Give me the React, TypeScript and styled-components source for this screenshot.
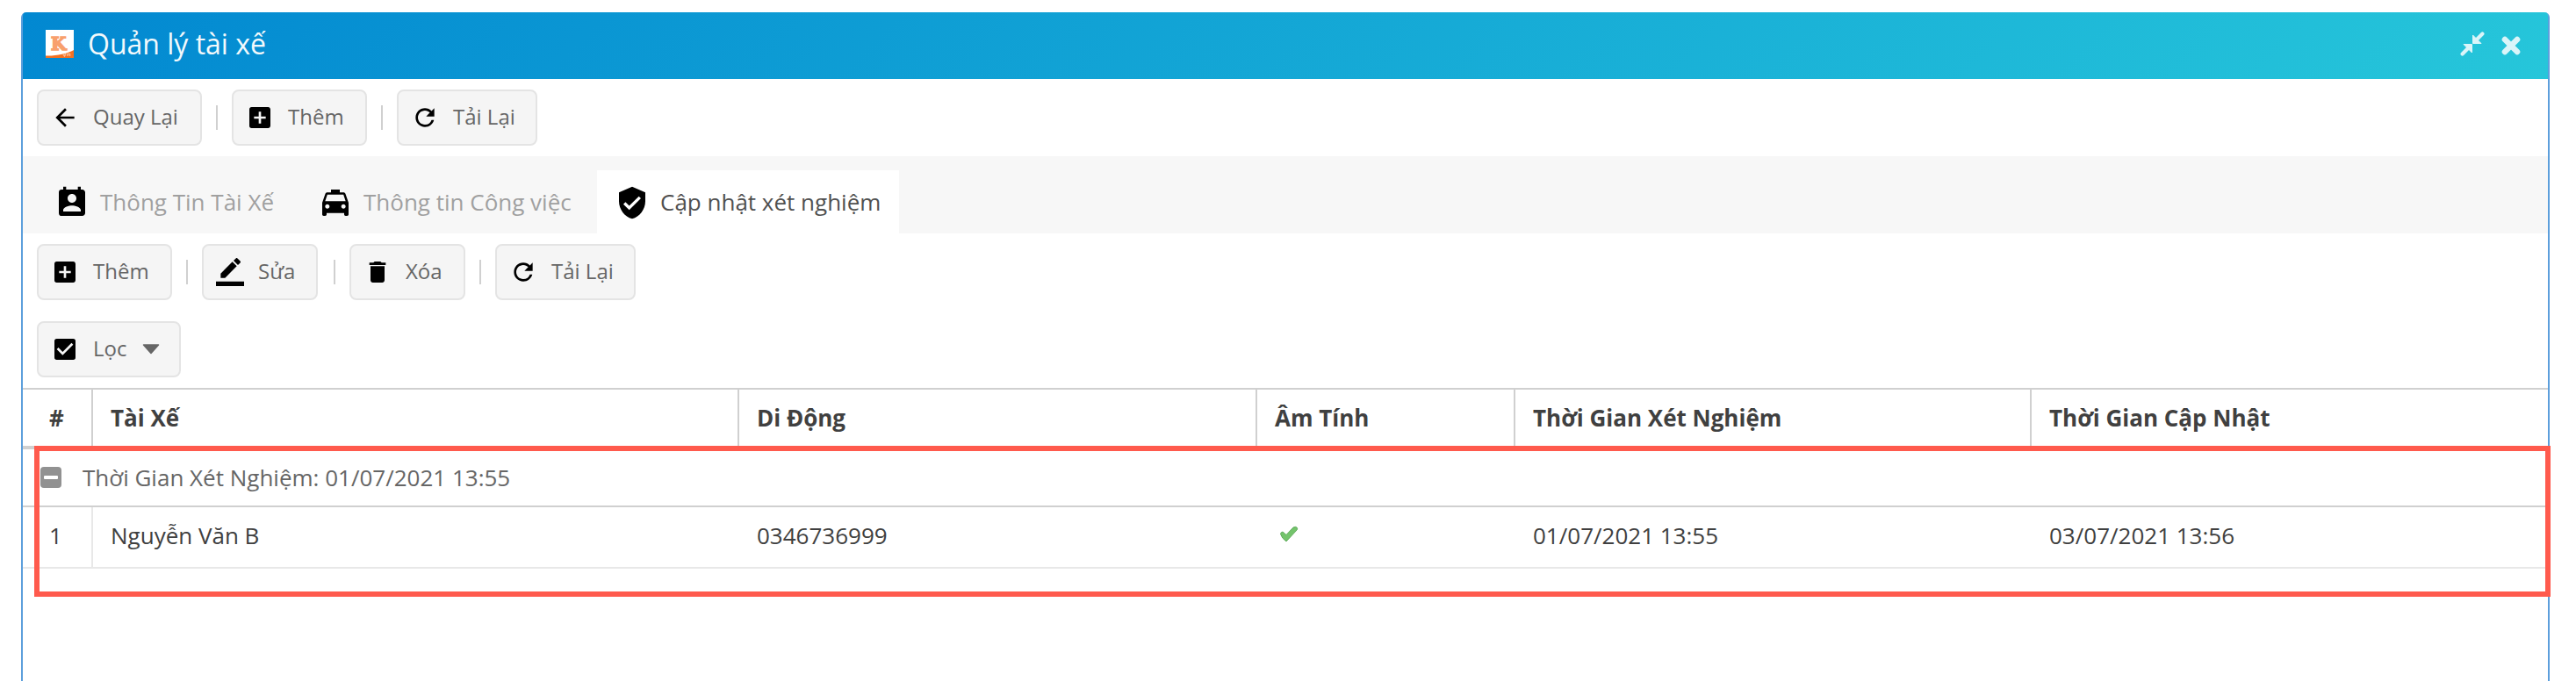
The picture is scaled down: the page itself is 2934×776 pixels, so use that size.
import React from "react";
import styled, { createGlobalStyle } from "styled-components";
import {
  MdArrowBack, MdAddBox, MdRefresh, MdCheckBox, MdDelete,
  MdPermContactCalendar, MdLocalTaxi, MdVerifiedUser,
} from "react-icons/md";

const Global = createGlobalStyle`
  * { box-sizing: border-box; }
  body { margin: 0; background: #fff; font-family: "Open Sans", "Noto Sans", sans-serif; }
`;
const Page = styled.div`
  height: 776px; padding: 14px 30px 0 24px; overflow: hidden; position: relative;
`;
const Window = styled.div`
  height: 762px; border: solid #5c9fdc; border-width: 0 2px; background: #fff;
  border-radius: 6px 6px 0 0; display: flex; flex-direction: column;
`;
const TitleBar = styled.header`
  height: 76px; flex: none; display: flex; align-items: center; padding: 0 31px 4px 26px;
  background: linear-gradient(135deg, #0288d1, #26c6da); border-radius: 4px 4px 0 0; color: #f2f9fc;
`;
const Title = styled.h1`
  margin: 0 auto 0 16px; font-size: 32px; font-weight: 400; line-height: 44px; padding-bottom: 1px;
`;
const WindowTools = styled.div`
  display: flex; gap: 19px; align-items: center;
  svg:last-child { margin-top: 3px; }
`;
const Toolbar = styled.div`
  height: 88px; flex: none; display: flex; align-items: center; padding: 0 16px;
`;
const Button = styled.button<{ $w: number }>`
  height: 64px; width: ${(p) => p.$w}px; padding: 0 0 0 14px; display: flex; align-items: center;
  border: 2px solid #e4e4e4; border-radius: 8px; background: #f5f5f5; color: #666;
  font: 400 24px/32px "Open Sans", sans-serif; white-space: nowrap;
  svg { flex: none; color: #000; }
`;
const Label = styled.span`
  margin-left: 16px; padding-bottom: 2px;
`;
const TabLabel = styled.span`
  margin-left: 12px; padding-bottom: 2px;
`;
const Divider = styled.i<{ $l?: number }>`
  width: 2px; height: 28px; background: #d0d0d0; margin: 0 16px 0 ${(p) => p.$l ?? 16}px;
`;
const Tabs = styled.nav`
  height: 88px; flex: none; display: flex; align-items: flex-end; background: #f7f7f7; padding-left: 14px;
`;
const Tab = styled.div<{ $w: number; $active?: boolean }>`
  height: 72px; width: ${(p) => p.$w}px; padding: 2px 0 0 ${(p) => (p.$active ? 20 : 22)}px;
  display: flex; align-items: center; font-size: 26px; line-height: 36px; white-space: nowrap;
  background: ${(p) => (p.$active ? "#fff" : "transparent")}; color: ${(p) => (p.$active ? "#505050" : "#a0a0a0")};
  svg { flex: none; color: #000; }
`;
const Grid = styled.section`
  border-top: 2px solid #d0d0d0; font-size: 26px; color: #404040;
`;
const Row = styled.div<{ $head?: boolean }>`
  display: grid; grid-template-columns: 80px 736px 590px 294px 588px 1fr;
  height: ${(p) => (p.$head ? 68 : 70)}px;
  border-bottom: ${(p) => (p.$head ? "4px solid #d0d0d0" : "2px solid #e8e8e8")};
  font-weight: ${(p) => (p.$head ? 700 : 400)};
`;
const Cell = styled.div<{ $line?: string; $pad?: number; $up?: number }>`
  display: flex; align-items: center; padding: 0 0 ${(p) => p.$up ?? 0}px ${(p) => p.$pad ?? 20}px;
  border-right: 2px solid ${(p) => p.$line ?? "transparent"}; white-space: nowrap;
`;
const Group = styled.div`
  height: 66px; border-bottom: 2px solid #d0d0d0; display: flex; align-items: center;
  padding-left: 20px; gap: 24px; color: #666;
`;
const Highlight = styled.div`
  position: absolute; left: 39px; top: 508px; width: 2866px; height: 172px; border: 6px solid #ff5a4d;
`;

const Logo = () => (
  <svg width="32" height="32" viewBox="0 0 32 32">
    <path fill="#fff" d="M0 0h32v32H0z" />
    <text
      x="6" y="22.5" fontFamily="DejaVu Serif, serif" fontWeight="700" fontSize="20"
      fill="#f8a06c" stroke="#f8a06c" strokeWidth="1.6"
    >K</text>
    <path fill="#f37021" d="M0 32v-2.5C11 30 24 27.500 32 23v9z" />
    <path stroke="#f9b78e" strokeWidth="1.5" fill="none" d="M20 28l1.500 2 1.500-2.500M25 30v-2.500h2.500V30" />
  </svg>
);
const Collapse = () => (
  <svg width="28" height="28" viewBox="0 0 28 28" fill="#daf5f9">
    <path fill="none" stroke="#daf5f9" strokeWidth="4.2" strokeLinecap="round" d="M25.400 2.600L19 9M2.600 25.400L9 19" />
    <path
      stroke="#daf5f9" strokeLinejoin="round"
      d="M14.500 4V13.500H24zM13.500 24V14.500H4z"
    />
  </svg>
);
const Close = () => (
  <svg width="22" height="22" viewBox="0 0 22 22" stroke="#daf5f9" strokeWidth="6.6" strokeLinecap="round">
    <path d="M4 4l14 14M18 4L4 18" />
  </svg>
);
const Pencil = () => (
  <svg width="32" height="32" viewBox="0 0 24 24" fill="currentColor">
    <path d="M17.750 7L14 3.250l-10 10V17h3.750l10-10zm2.960-2.960c.39-.39.39-1.020 0-1.410L18.370.29a.996.996 0 0 0-1.410 0L15 2.250 18.750 6l1.960-1.960zM0 20h24v4H0z" />
  </svg>
);
const Caret = styled(({ className }: { className?: string }) => (
  <svg className={className} width="20" height="12" viewBox="0 0 20 12">
    <path d="M1.500 1h17L10 10.500z" fill="#666" stroke="#666" strokeWidth="1.5" strokeLinejoin="round" />
  </svg>
))`
  margin-left: 18px;
`;
const Minus = () => (
  <svg width="24" height="24" viewBox="0 0 24 24">
    <rect width="24" height="24" rx="4" fill="#919191" />
    <rect x="4" y="10" width="16" height="4" rx="1" fill="#fff" />
  </svg>
);
const Tick = () => (
  <svg width="22" height="20" viewBox="0 0 22 20">
    <path
      d="M1.500 9.500Q1.500 7.500 4 7l4 3.500L16 2q3-1.500 4.500.5.500 1.500-.5 2.500L8 18Q3 14.500 1.500 9.500z"
      fill="#74c46c" stroke="#62ac5e" strokeLinejoin="round"
    />
  </svg>
);

const line = "#d0d0d0";
const heads = ["Tài Xế", "Di Động", "Âm Tính", "Thời Gian Xét Nghiệm", "Thời Gian Cập Nhật"];

export default function App() {
  return (
    <Page>
      <Global />
      <Window>
        <TitleBar>
          <Logo />
          <Title>Quản lý tài xế</Title>
          <WindowTools><Collapse /><Close /></WindowTools>
        </TitleBar>
        <Toolbar>
          <Button $w={188}><MdArrowBack size={32} /><Label>Quay Lại</Label></Button>
          <Divider />
          <Button $w={154}><MdAddBox size={32} /><Label>Thêm</Label></Button>
          <Divider />
          <Button $w={160}><MdRefresh size={32} /><Label>Tải Lại</Label></Button>
        </Toolbar>
        <Tabs>
          <Tab $w={300}><MdPermContactCalendar size={40} /><TabLabel>Thông Tin Tài Xế</TabLabel></Tab>
          <Tab $w={340}><MdLocalTaxi size={40} /><TabLabel>Thông tin Công việc</TabLabel></Tab>
          <Tab $w={344} $active><MdVerifiedUser size={40} /><TabLabel>Cập nhật xét nghiệm</TabLabel></Tab>
        </Tabs>
        <Toolbar>
          <Button $w={154}><MdAddBox size={32} /><Label>Thêm</Label></Button>
          <Divider />
          <Button $w={132}><Pencil /><Label>Sửa</Label></Button>
          <Divider $l={18} />
          <Button $w={132}><MdDelete size={32} /><Label>Xóa</Label></Button>
          <Divider />
          <Button $w={160}><MdRefresh size={32} /><Label>Tải Lại</Label></Button>
        </Toolbar>
        <Toolbar>
          <Button $w={164}><MdCheckBox size={32} /><Label>Lọc</Label><Caret /></Button>
        </Toolbar>
        <Grid>
          <Row $head>
            <Cell $pad={30} $line={line}>#</Cell>
            {heads.map((h, i) => <Cell key={h} $line={i < 4 ? line : undefined}>{h}</Cell>)}
          </Row>
          <Group><Minus /><span>Thời Gian Xét Nghiệm: 01/07/2021 13:55</span></Group>
          <Row>
            <Cell $pad={30} $up={4} $line="#e8e8e8">1</Cell>
            <Cell $up={4}>Nguyễn Văn B</Cell>
            <Cell $up={4}>0346736999</Cell>
            <Cell $up={6} $pad={25}><Tick /></Cell>
            <Cell $up={4}>01/07/2021 13:55</Cell>
            <Cell $up={4}>03/07/2021 13:56</Cell>
          </Row>
        </Grid>
      </Window>
      <Highlight />
    </Page>
  );
}
